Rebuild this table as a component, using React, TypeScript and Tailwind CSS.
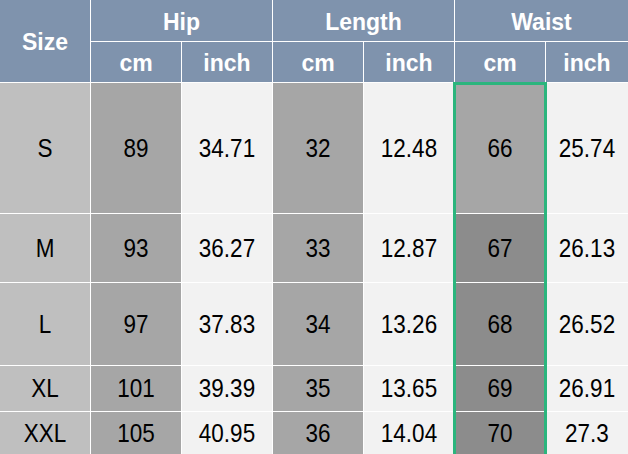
import React from 'react';

const rows = [
  { size: 'S', hipCm: '89', hipIn: '34.71', lenCm: '32', lenIn: '12.48', waistCm: '66', waistIn: '25.74' },
  { size: 'M', hipCm: '93', hipIn: '36.27', lenCm: '33', lenIn: '12.87', waistCm: '67', waistIn: '26.13' },
  { size: 'L', hipCm: '97', hipIn: '37.83', lenCm: '34', lenIn: '13.26', waistCm: '68', waistIn: '26.52' },
  { size: 'XL', hipCm: '101', hipIn: '39.39', lenCm: '35', lenIn: '13.65', waistCm: '69', waistIn: '26.91' },
  { size: 'XXL', hipCm: '105', hipIn: '40.95', lenCm: '36', lenIn: '14.04', waistCm: '70', waistIn: '27.3' },
];

const Head: React.FC<{ className?: string; children: React.ReactNode }> = ({ className = '', children }) => (
  <div className={`flex items-center justify-center bg-[#7f93ad] pt-[3px] text-[23px] font-bold text-white ${className}`}>
    {children}
  </div>
);

const Cell: React.FC<{ bg: string; children: React.ReactNode }> = ({ bg, children }) => (
  <div className={`flex items-center justify-center pt-px text-[22.5px] text-black ${bg}`}>
    <span className="inline-block scale-y-[1.12]">{children}</span>
  </div>
);

const App: React.FC = () => {
  return (
    <div className="relative h-[454px] w-[628px] overflow-hidden bg-white font-['Liberation_Sans',Arial,sans-serif]">
      <div className="grid grid-cols-[90px_90px_90px_90px_90px_90px_82px] grid-rows-[41px_40px_130px_68px_82px_45px_42px] gap-px bg-white">
        <Head className="row-span-2">Size</Head>
        <Head className="col-span-2">Hip</Head>
        <Head className="col-span-2">Length</Head>
        <Head className="col-span-2">Waist</Head>
        <Head>cm</Head>
        <Head>inch</Head>
        <Head>cm</Head>
        <Head>inch</Head>
        <Head>cm</Head>
        <Head>inch</Head>

        {rows.map((r, i) => (
          <React.Fragment key={r.size}>
            <Cell bg="bg-[#bfbfbf]">{r.size}</Cell>
            <Cell bg="bg-[#a6a6a6]">{r.hipCm}</Cell>
            <Cell bg="bg-[#f2f2f2]">{r.hipIn}</Cell>
            <Cell bg="bg-[#a6a6a6]">{r.lenCm}</Cell>
            <Cell bg="bg-[#f2f2f2]">{r.lenIn}</Cell>
            <Cell bg={i === 0 ? 'bg-[#a6a6a6]' : 'bg-[#8c8c8c]'}>{r.waistCm}</Cell>
            <Cell bg="bg-[#f2f2f2]">{r.waistIn}</Cell>
          </React.Fragment>
        ))}
      </div>

      {/* selection outline on waist cm column */}
      <div className="pointer-events-none absolute left-[453px] top-[82px] h-[380px] w-[94px] border-[3px] border-b-0 border-[#2bb57d]" />
    </div>
  );
};

export default App;
